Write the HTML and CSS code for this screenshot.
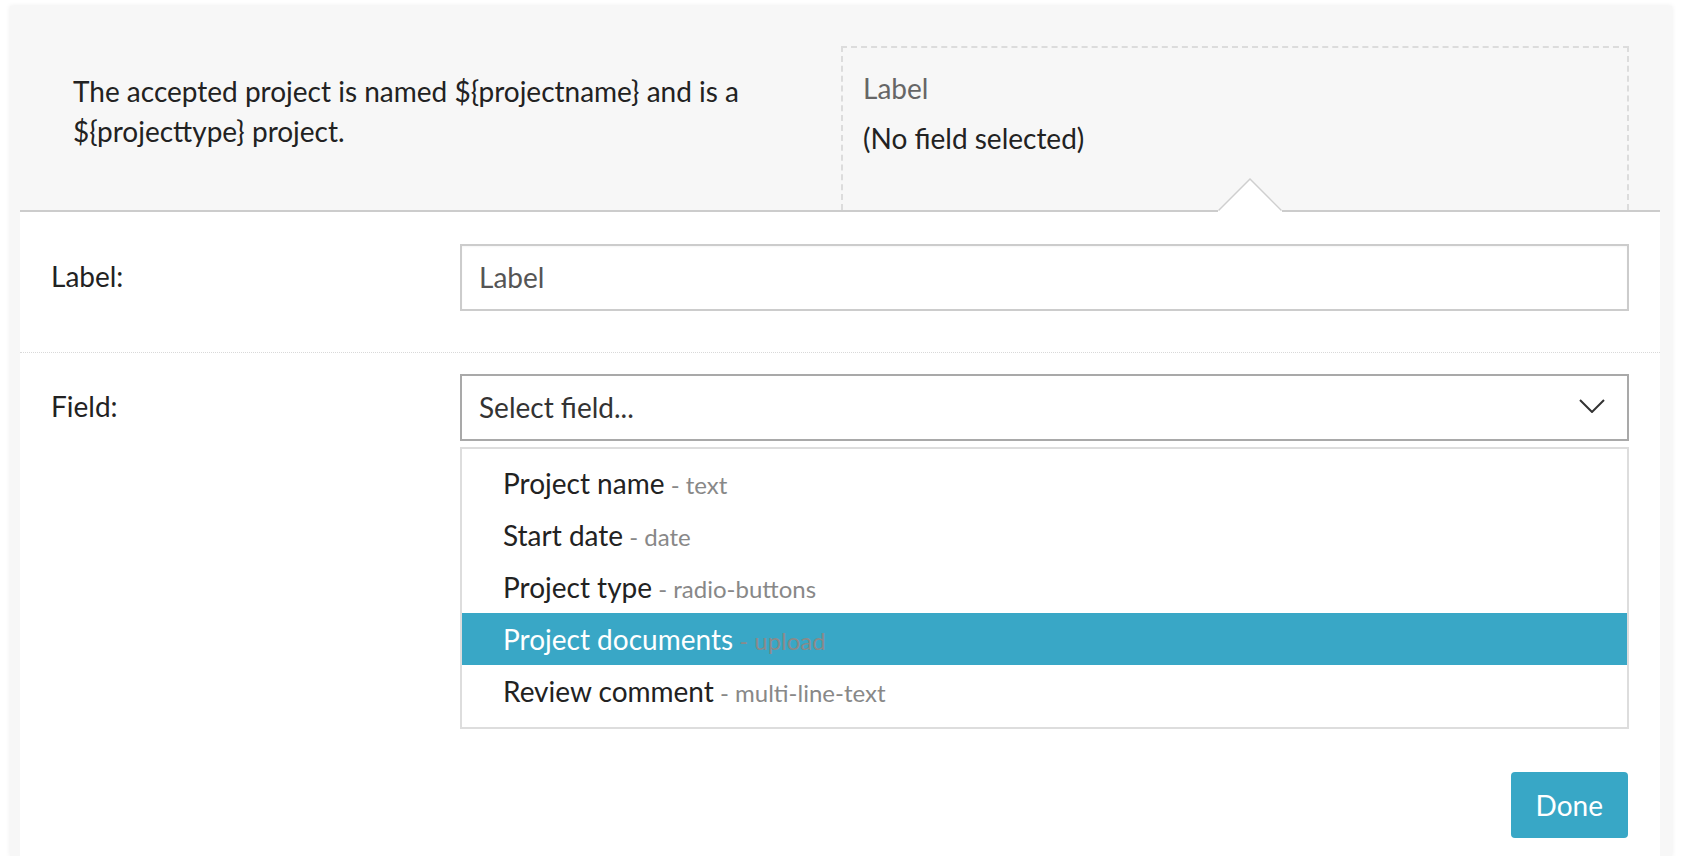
FILE: index.html
```html
<!DOCTYPE html>
<html lang="en">
<head>
<meta charset="utf-8">
<title>Field editor</title>
<link rel="stylesheet" href="styles.css">
</head>
<body>
<div class="panel">
  <div class="preview">
    <p class="sentence">The accepted project is named ${projectname} and is a ${projecttype} project.</p>
    <div class="field-preview">
      <div class="fp-label">Label</div>
      <div class="fp-value">(No field selected)</div>
    </div>
  </div>
  <div class="editor">
    <svg class="caret" width="64" height="34" viewBox="0 0 64 34">
      <path d="M0 34 L0 32 L32 0 L64 32 L64 34 Z" fill="#fff"/>
      <path d="M0.5 32.5 L32 1 L63.5 32.5" fill="none" stroke="#cfcfcf" stroke-width="1.5"/>
    </svg>
    <div class="row row-first">
      <div class="row-title">Label:</div>
      <div class="input">Label</div>
    </div>
    <div class="row row-second">
      <div class="row-title">Field:</div>
      <div class="control">
        <div class="select">
          <span>Select field...</span>
          <svg class="chevron" width="26" height="14" viewBox="0 0 26 14">
            <path d="M1 1 L13 13 L25 1" fill="none" stroke="#333" stroke-width="2"/>
          </svg>
        </div>
        <ul class="options">
          <li>Project name<span class="type"> - text</span></li>
          <li>Start date<span class="type"> - date</span></li>
          <li>Project type<span class="type"> - radio-buttons</span></li>
          <li class="active">Project documents<span class="type"> - upload</span></li>
          <li>Review comment<span class="type"> - multi-line-text</span></li>
        </ul>
        <div class="actions">
          <button class="done" type="button">Done</button>
        </div>
      </div>
    </div>
  </div>
</div>
</body>
</html>
```
FILE: styles.css
```css
html, body {
  margin: 0;
  padding: 0;
  background: #fff;
  height: 100%;
  overflow: hidden;
}

body {
  font-family: Lato, "Open Sans", "Liberation Sans", sans-serif;
  color: #222;
}

.panel {
  box-sizing: border-box;
  width: 1662px;
  height: 850px;
  margin: 6px 0 0 10px;
  padding: 0 12px 0 10px;
  background: #f7f7f7;
  box-shadow: 0 0 5px rgba(0, 0, 0, 0.08);
  display: flex;
  flex-direction: column;
}

.preview {
  box-sizing: border-box;
  height: 204px;
  padding: 40px 31px 0 53px;
  display: flex;
}

.sentence {
  flex: 1;
  margin: 0;
  padding-top: 25px;
  font-size: 28px;
  line-height: 40px;
  color: #222;
}

.field-preview {
  box-sizing: border-box;
  width: 788px;
  border: 2px dashed #dcdcdc;
  border-bottom: none;
  padding: 20px 20px 0;
  font-size: 28px;
  line-height: 40px;
}

.fp-label {
  color: #666;
  margin-bottom: 10px;
}

.fp-value {
  color: #222;
}

.editor {
  flex: 1;
  position: relative;
  background: #fff;
  border-top: 2px solid #cccccc;
}

.caret {
  position: absolute;
  top: -34px;
  left: 1198px;
  display: block;
}

.row {
  display: grid;
  grid-template-columns: 409px 1fr;
  padding: 0 31px;
  font-size: 28px;
}

.row-first {
  padding-top: 32px;
  padding-bottom: 41px;
  border-bottom: 1px dotted #d9d9d9;
}

.row-second {
  padding-top: 21px;
}

.row-title {
  line-height: 64px;
  color: #222;
}

.input {
  box-sizing: border-box;
  height: 67px;
  border: 2px solid #cccccc;
  padding: 0 17px;
  line-height: 62px;
  color: #555;
  box-shadow: inset 0 1px 2px rgba(0, 0, 0, 0.04);
}

.select {
  box-sizing: border-box;
  height: 67px;
  border: 2px solid #a9a9a9;
  padding: 0 22px 0 17px;
  display: flex;
  align-items: center;
  justify-content: space-between;
  color: #333;
}

.select span {
  margin-top: -2px;
}

.chevron {
  display: block;
  margin-top: -3px;
}

.options {
  list-style: none;
  margin: 6px 0 0;
  padding: 8px 0 10px;
  border: 2px solid #dddddd;
}

.options li {
  height: 52px;
  line-height: 52px;
  padding-left: 41px;
  color: #222;
  white-space: nowrap;
}

.options .type {
  font-size: 24px;
  color: #888;
}

.options li.active {
  background: #39a7c6;
  color: #fff;
}

.options li.active .type {
  color: #8a8a8a;
}

.actions {
  display: flex;
  justify-content: flex-end;
  margin-top: 43px;
  padding-right: 1px;
}

.done {
  height: 66px;
  padding: 0 25px;
  border: none;
  border-radius: 4px;
  background: #38a7c6;
  color: #fff;
  font-family: Lato, "Open Sans", "Liberation Sans", sans-serif;
  font-size: 28px;
  cursor: pointer;
}
```
